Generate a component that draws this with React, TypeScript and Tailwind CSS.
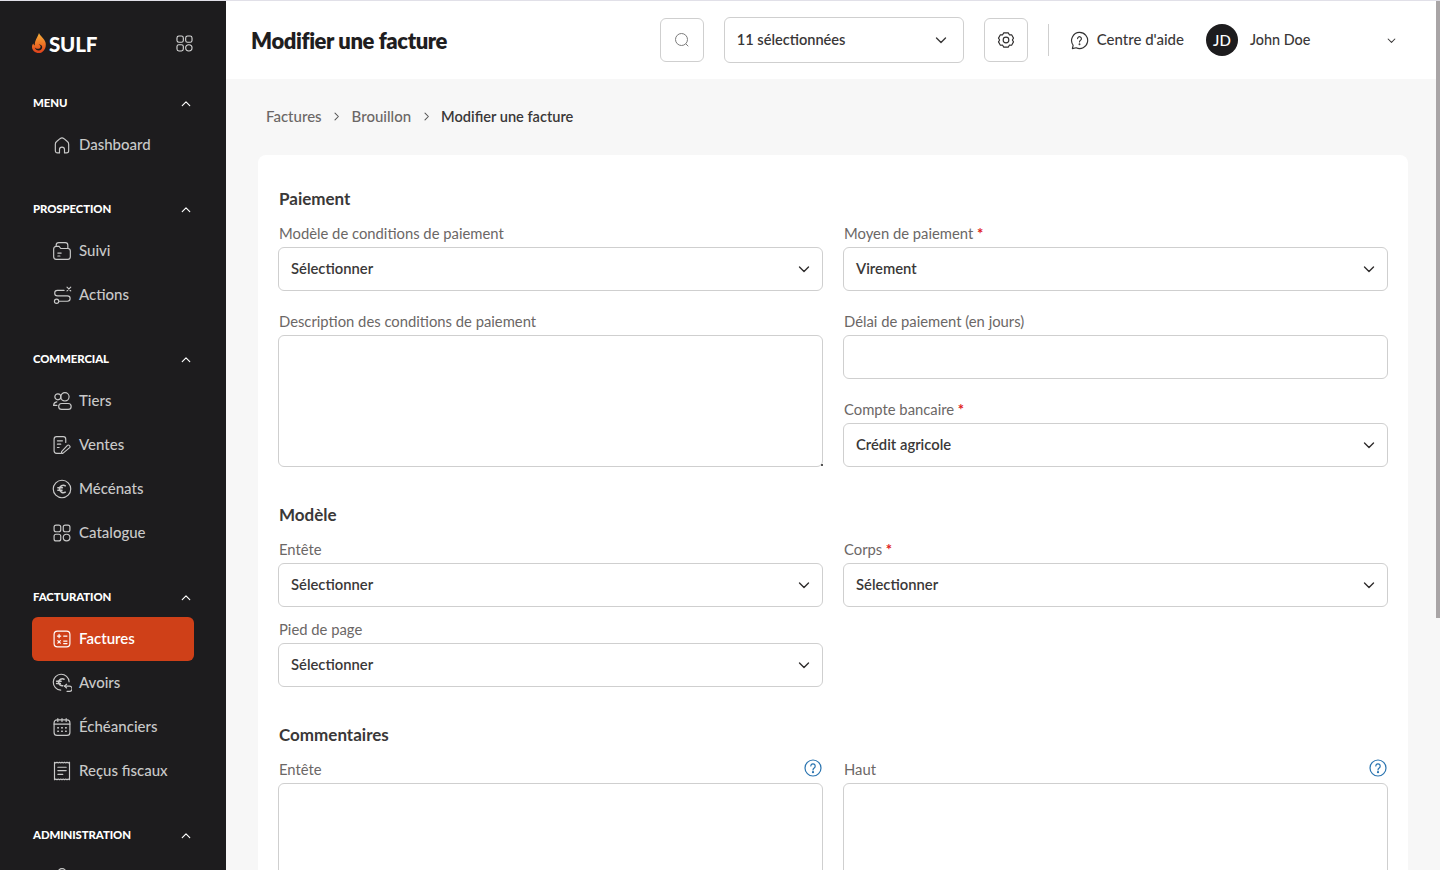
import React from "react";

type IconProps = { className?: string };
const S = ({ className, children }: IconProps & { children: React.ReactNode }) => (
  <svg viewBox="0 0 24 24" fill="none" stroke="currentColor" strokeWidth={1.4} strokeLinecap="round" strokeLinejoin="round" className={className}>
    {children}
  </svg>
);

const Grid4 = ({ className }: IconProps) => (
  <S className={className}>
    <rect x="2.5" y="2.5" width="8" height="8" rx="2.4" />
    <rect x="13.5" y="2.5" width="8" height="8" rx="2.4" />
    <rect x="2.5" y="13.5" width="8" height="8" rx="2.4" />
    <circle cx="17.5" cy="17.5" r="4" />
  </S>
);
const Home = ({ className }: IconProps) => (
  <S className={className}>
    <path d="M9 21.5H6.5a2.5 2.5 0 0 1-2.5-2.5v-8a4 4 0 0 1 1.6-3.2l4-3.4a4 4 0 0 1 4.8 0l4 3.4A4 4 0 0 1 20 11v8a2.5 2.5 0 0 1-2.5 2.5H15v-4a3 3 0 0 0-6 0z" />
  </S>
);
const Folder = ({ className }: IconProps) => (
  <S className={className}>
    <path d="M2 19V9.500a3 3 0 0 1 3-3h3.500l2 2.500h8.500a3 3 0 0 1 3 3V19a3 3 0 0 1-3 3H5a3 3 0 0 1-3-3z" />
    <path d="M5 6.500V5a3 3 0 0 1 3-3h8a3 3 0 0 1 3 3v4" />
    <path d="M7 14.500h4M7 18h2.500" />
  </S>
);
const Route = ({ className }: IconProps) => (
  <S className={className}>
    <path d="M14.500 6.500H6.500a3 3 0 0 0 0 6.500h12a3 3 0 0 1 0 6.500H9" />
    <circle cx="5.500" cy="19.500" r="2.600" />
    <path d="M18 2.500l4.500 4.500M22.500 2.500L18 7" />
  </S>
);
const Users = ({ className }: IconProps) => (
  <S className={className}>
    <circle cx="7" cy="7" r="3.600" />
    <path d="M2 17.200c0-2.400 1.400-3.800 3.800-4.200" />
    <path d="M2 17.200h4" />
    <circle cx="15.500" cy="7" r="5" />
    <rect x="8" y="15" width="15" height="7" rx="3.500" />
  </S>
);
const User = ({ className }: IconProps) => (
  <S className={className}>
    <circle cx="12" cy="7" r="5" />
    <rect x="4" y="15" width="16" height="7" rx="3.500" />
  </S>
);
const Sales = ({ className }: IconProps) => (
  <S className={className}>
    <path d="M16.500 9V5a3 3 0 0 0-3-3h-8a3 3 0 0 0-3 3v14a3 3 0 0 0 3 3h5" />
    <path d="M6.500 7h6M6.500 11h4M6.500 15h2" />
    <path d="M13 22h-1.500v-2l7-7.500a1.500 1.500 0 0 1 2.200 0l.5.5a1.500 1.500 0 0 1 0 2.200z" />
  </S>
);
const Euro = ({ className }: IconProps) => (
  <S className={className}>
    <circle cx="12" cy="12" r="10.500" />
    <path d="M16 8.200a4.600 4.600 0 0 0-7 3.800 4.600 4.600 0 0 0 7 3.800" strokeWidth={1.8} />
    <path d="M7 10.600h5.500M7 13.400h5" strokeWidth={1.8} />
  </S>
);
const Invoice = ({ className }: IconProps) => (
  <S className={className}>
    <rect x="2.500" y="2.500" width="19" height="19" rx="4" />
    <path d="M6.500 8.500h4M8.500 6.500v4M14 8.500h4M14 14.500h4M14 17.500h4M7 14l3 3M10 14l-3 3" />
  </S>
);
const EuroBack = ({ className }: IconProps) => (
  <S className={className}>
    <path d="M20.500 10.500a9.500 9.500 0 1 0-10 10" />
    <path d="M14.500 7.500a4.400 4.400 0 0 0-6.500 3.600 4.400 4.400 0 0 0 5 4.200" strokeWidth={1.8} />
    <path d="M5.500 10h5.500M5.500 12.600h4.500" strokeWidth={1.8} />
    <path d="M17.500 13.500l-2.500 2.200 2.500 2.300" />
    <path d="M15 15.700h6a2.500 2.500 0 0 1 0 6.300h-3" />
  </S>
);
const Calendar = ({ className }: IconProps) => (
  <S className={className}>
    <rect x="2.500" y="3.500" width="19" height="18.500" rx="3.500" />
    <path d="M2.500 8.500h19M7 1.800v3.500M12 1.800v3.500M17 1.800v3.500" />
    <path d="M7 13h.6M11.700 13h.6M16.400 13h.6M7 17h.6M11.700 17h.6M16.400 17h.6" strokeWidth={1.9} />
  </S>
);
const Receipt = ({ className }: IconProps) => (
  <S className={className}>
    <path d="M3 1.500c1 1 2 1 3 0 1 1 2 1 3 0 1 1 2 1 3 0 1 1 2 1 3 0 1 1 2 1 3 0 1 1 2 1 3 0v21c-1-1-2-1-3 0-1-1-2-1-3 0-1-1-2-1-3 0-1-1-2-1-3 0-1-1-2-1-3 0-1-1-2-1-3 0z" />
    <path d="M7 7.500h10M7 11.500h10M7 16h6" />
  </S>
);
const ChevronDown = ({ className }: IconProps) => (
  <svg viewBox="0 0 12 12" fill="none" stroke="currentColor" strokeWidth={1.4} strokeLinecap="round" strokeLinejoin="round" className={className}>
    <path d="M1.500 4l4.500 4.500L10.500 4" />
  </svg>
);
const HelpCircle = ({ className }: IconProps) => (
  <svg viewBox="0 0 18 18" fill="none" stroke="currentColor" strokeWidth={1.2} className={className}>
    <circle cx="9" cy="9" r="8" />
    <path d="M6.800 7a2.200 2.200 0 1 1 3.400 1.900c-.8.500-1.200 1-1.200 2" strokeLinecap="round" />
    <circle cx="9" cy="13.200" r=".5" fill="currentColor" />
  </svg>
);

const box = "block w-full rounded-md border border-[#cfcfcf] bg-white outline-none";

const Field = ({ label, required, help, children, className }: { label: string; required?: boolean; help?: boolean; children: React.ReactNode; className?: string }) => (
  <div className={className}>
    <div className="flex items-center justify-between h-5 mb-1 text-[14.8px] leading-5 text-[#6b6766]">
      <span className="-mt-px pl-px">
        {label}
        {required && <span className="text-[#e02020] font-bold"> *</span>}
      </span>
      {help && <HelpCircle className="w-[18px] h-[18px] -mt-0.5 mr-px text-[#2a74b0]" />}
    </div>
    {children}
  </div>
);

const Select = ({ value }: { value: string }) => (
  <div className="h-11 rounded-md border border-[#cfcfcf] bg-white flex items-center justify-between pl-3 pr-3 text-[14.8px] font-semibold text-[#3a3838]">
    <span className="-mt-px">{value}</span>
    <ChevronDown className="w-3 h-3 text-[#2f2d2d]" />
  </div>
);

const Heading = ({ children }: { children: React.ReactNode }) => (
  <h2 className="h-6 leading-6 mb-3 pl-px text-[17px] font-bold text-[#3a3838]">{children}</h2>
);

const TextArea = () => (
  <div className="relative">
    <textarea className={`${box} h-[132px] resize-none`} />
    <span className="absolute right-0 bottom-px w-[2px] h-[2px] bg-[#555]" />
  </div>
);

type Item = { label: string; Icon: (p: IconProps) => React.ReactElement; active?: boolean };
const sections: { title: string; items: Item[] }[] = [
  { title: "MENU", items: [{ label: "Dashboard", Icon: Home }] },
  { title: "PROSPECTION", items: [{ label: "Suivi", Icon: Folder }, { label: "Actions", Icon: Route }] },
  {
    title: "COMMERCIAL",
    items: [
      { label: "Tiers", Icon: Users },
      { label: "Ventes", Icon: Sales },
      { label: "Mécénats", Icon: Euro },
      { label: "Catalogue", Icon: Grid4 },
    ],
  },
  {
    title: "FACTURATION",
    items: [
      { label: "Factures", Icon: Invoice, active: true },
      { label: "Avoirs", Icon: EuroBack },
      { label: "Échéanciers", Icon: Calendar },
      { label: "Reçus fiscaux", Icon: Receipt },
    ],
  },
  { title: "ADMINISTRATION", items: [{ label: "", Icon: User }] },
];

const Sidebar = () => (
  <aside className="w-[226px] shrink-0 bg-[#1d1c1e] h-full overflow-hidden pl-8 pr-8">
    <div className="h-[92px] flex items-center justify-between pb-[6px]">
      <div className="flex items-center gap-[3px]">
        <svg viewBox="0 0 14 20" className="w-[14px] h-[20px] -mt-[2px]">
          <defs>
            <linearGradient id="flame" x1="0" y1="0" x2="0" y2="1">
              <stop offset="0" stopColor="#f7b23b" />
              <stop offset="0.55" stopColor="#ee7426" />
              <stop offset="1" stopColor="#dd3f1c" />
            </linearGradient>
          </defs>
          <path d="M7 0c.6 2.600 5.600 5.300 6.600 9.700C14.600 15 11.500 20 6.800 20 3 20 0 17.300 0 14c0-1.400.5-2.500 1.300-3.500.2 1 .7 1.600 1.500 1.900C2.500 8 5.200 5 7 0z" fill="url(#flame)" />
          <path d="M2.800 14.500c1.300 1.300 3.200 1.700 4.800.9 1-.6 1.300-1.700.8-2.600-.4-.7-1.100-1.100-1.700-1.500 1.700.1 3 .9 3.400 2.200.5 1.800-.9 3.700-3 4-1.900.3-3.800-1-4.300-3z" fill="#1d1c1e" />
        </svg>
        <span className="text-white font-black text-[20.5px] leading-none tracking-[-0.2px]">SULF</span>
      </div>
      <Grid4 className="w-[19px] h-[19px] text-[#d8d8d8] -mt-[1px]" />
    </div>
    {sections.map((s) => (
      <div key={s.title} className="mb-8">
        <div className="h-5 flex items-center justify-between pl-[1px] pr-[3px] text-white text-[11.4px] font-black tracking-[-0.1px]">
          <span>{s.title}</span>
          <ChevronDown className="w-[10px] h-[10px] rotate-180 mt-[2px]" />
        </div>
        <div className="mt-[10px]">
          {s.items.map((it) => (
            <div
              key={it.label}
              className={`h-11 w-[162px] rounded-md flex items-center gap-[7px] pl-5 text-[15px] ${it.active ? "bg-[#cf4018] text-white font-semibold" : "text-[#c9c9c9] font-medium"}`}
            >
              <it.Icon className="w-5 h-5 shrink-0" />
              <span className="-mt-px">{it.label}</span>
            </div>
          ))}
        </div>
      </div>
    ))}
  </aside>
);

const Topbar = () => (
  <header className="h-[78px] bg-white flex items-center pl-[25px] pr-[38px] shrink-0">
    <h1 className="text-[22px] font-extrabold text-[#1f1e1f] tracking-[-0.4px]">Modifier une facture</h1>
    <div className="ml-auto flex items-center">
      <div className="w-11 h-11 rounded-md border border-[#cfcfcf] flex items-center justify-center text-[#7c7c7c]">
        <svg viewBox="0 0 16 16" fill="none" stroke="currentColor" strokeWidth={1} className="w-4 h-4"><circle cx="7.500" cy="7.500" r="6" /><path d="M12 12l2 2" strokeLinecap="round" /></svg>
      </div>
      <div className="ml-5 w-[240px] h-[46px] rounded-md border border-[#cfcfcf] flex items-center justify-between pl-[12px] pr-4 text-[14.6px] font-semibold text-[#3a3838]">
        <span>11 sélectionnées</span>
        <ChevronDown className="w-3 h-3" />
      </div>
      <div className="ml-5 w-11 h-11 rounded-md border border-[#cfcfcf] flex items-center justify-center text-[#2f2d2d]">
        <svg viewBox="0 0 24 24" fill="none" stroke="currentColor" strokeWidth={1.5} strokeLinejoin="round" className="w-[18px] h-[18px]">
          <path d="M9 2.500h6l1.500 2.600 3-.1 2.500 4.500-1.500 2.500 1.500 2.500-2.500 4.500-3-.1L15 21.500H9l-1.500-2.600-3 .1L2 14.500 3.500 12 2 9.500 4.500 5l3 .1z" />
          <circle cx="12" cy="12" r="3.800" />
        </svg>
      </div>
      <div className="ml-5 w-px h-8 bg-[#cfcfcf]" />
      <svg viewBox="0 0 20 20" fill="none" stroke="#333" strokeWidth={1.2} strokeLinecap="round" className="ml-[21px] w-[19px] h-[19px]">
        <path d="M10 1.500a8.500 8.500 0 1 1-3.500 16.200L2.500 18.500l.8-3.500A8.500 8.500 0 0 1 10 1.500z" strokeLinejoin="round" />
        <path d="M8 8a2 2 0 1 1 3.200 1.600c-.8.600-1.200 1-1.200 1.900" />
        <circle cx="10" cy="14" r=".4" fill="#333" />
      </svg>
      <span className="ml-[8px] -mt-px text-[15px] font-medium text-[#3a3838]">Centre d'aide</span>
      <div className="ml-[22px] w-8 h-8 rounded-full bg-[#1d1c1e] text-white text-[15px] font-medium flex items-center justify-center">JD</div>
      <span className="ml-3 w-[137px] text-[14.4px] font-medium text-[#3a3838]">John Doe</span>
      <ChevronDown className="w-[9px] h-[9px] text-[#3a3838] mr-[6px]" />
    </div>
  </header>
);

const Crumbs = () => (
  <nav className="h-[76px] shrink-0 flex items-center pl-[40px] text-[15px] text-[#6b6766] font-medium pb-[1px]">
    <span>Factures</span>
    <ChevronDown className="w-[9px] h-[9px] -rotate-90 mx-[10.5px] text-[#555]" />
    <span>Brouillon</span>
    <ChevronDown className="w-[9px] h-[9px] -rotate-90 mx-[10.5px] text-[#555]" />
    <span className="text-[#3a3838] font-semibold text-[14.6px]">Modifier une facture</span>
  </nav>
);

export default function App() {
  return (
    <div className="relative h-[870px] w-[1440px] overflow-hidden flex border-t border-[#e1e0e8] bg-[#f7f7f7] font-['Lato',sans-serif]">
      <Sidebar />
      <main className="flex-1 min-w-0 flex flex-col">
        <Topbar />
        <Crumbs />
        <div className="ml-8 mr-8 rounded-t-lg bg-white pt-8 px-5 flex-1">
          <Heading>Paiement</Heading>
          <div className="grid grid-cols-2 gap-x-5 gap-y-5 mb-9">
            <Field label="Modèle de conditions de paiement"><Select value="Sélectionner" /></Field>
            <Field label="Moyen de paiement" required><Select value="Virement" /></Field>
            <Field label="Description des conditions de paiement" className="row-span-2">
              <TextArea />
            </Field>
            <Field label="Délai de paiement (en jours)"><input className={`${box} h-11`} /></Field>
            <Field label="Compte bancaire" required><Select value="Crédit agricole" /></Field>
          </div>
          <Heading>Modèle</Heading>
          <div className="grid grid-cols-2 gap-x-5 gap-y-3 mb-9">
            <Field label="Entête"><Select value="Sélectionner" /></Field>
            <Field label="Corps" required><Select value="Sélectionner" /></Field>
            <Field label="Pied de page"><Select value="Sélectionner" /></Field>
          </div>
          <Heading>Commentaires</Heading>
          <div className="grid grid-cols-2 gap-x-5">
            <Field label="Entête" help><TextArea /></Field>
            <Field label="Haut" help><TextArea /></Field>
          </div>
        </div>
      </main>
      <div className="absolute right-0 top-0 w-1 h-[617px] bg-[#a9a5a6]" />
    </div>
  );
}
